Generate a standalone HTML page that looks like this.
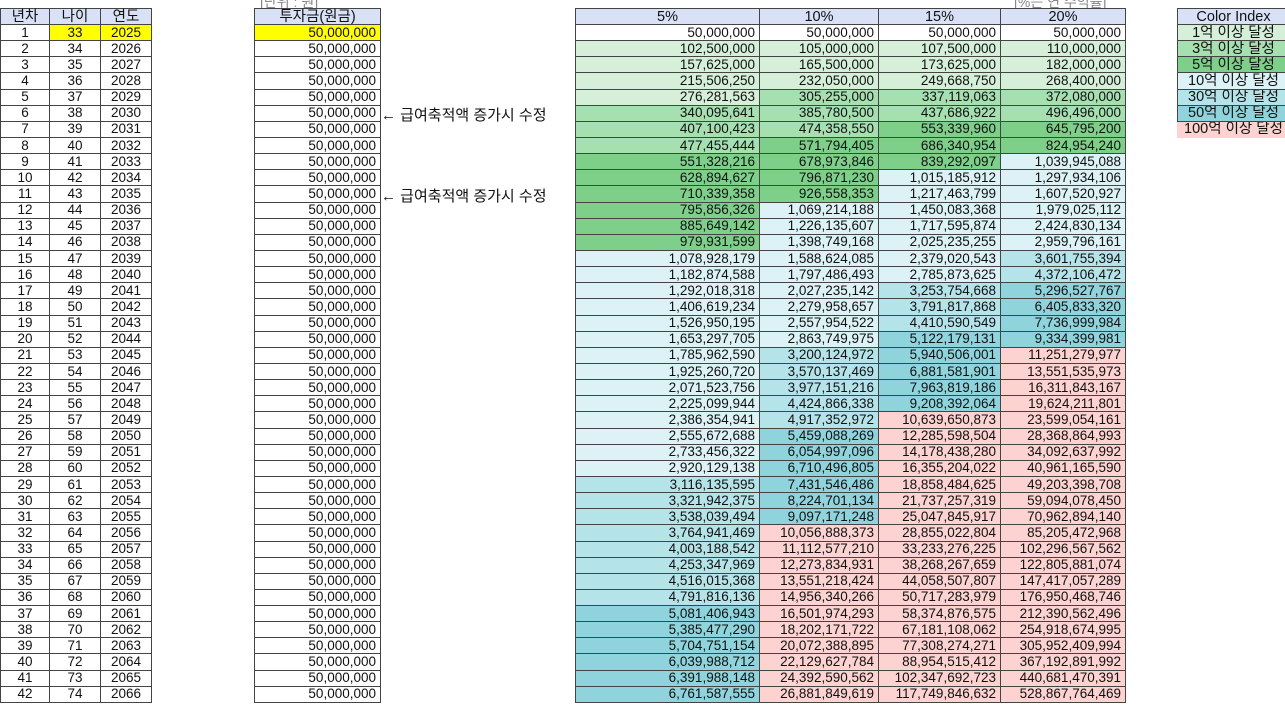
<!DOCTYPE html>
<html><head><meta charset="utf-8"><style>
body{margin:0;width:1285px;height:708px;background:#fff;position:relative;overflow:hidden;font-family:"Liberation Sans","Noto Sans CJK KR",sans-serif;font-size:13.5px;color:#111}
table{position:absolute;top:8px;border-collapse:collapse;table-layout:fixed}
td{border:1px solid #444;height:15.15px;padding:0 4px;line-height:14px;white-space:nowrap;overflow:hidden}
th{border:1px solid #444;height:15px;background:#d9e1f7;font-weight:normal;padding:0;line-height:14px;font-size:14.5px}
.c{text-align:center}.r{text-align:right}
.k{font-size:14.5px}
.y{background:#ffff00}
.g1{background:#d5efd9}.g2{background:#a6dfb0}.g3{background:#7dcf89}
.c1{background:#ddf2f6}.c2{background:#b5e3ea}.c3{background:#8fd4dc}.p{background:#fcd3d1}
.note{position:absolute;color:#888;font-size:14px;white-space:nowrap}
.arr{position:absolute;left:381px;font-size:15px;white-space:nowrap}
</style></head><body>
<div class="note" style="left:260px;top:-8px">[단위 : 원]</div>
<div class="note" style="left:1014px;top:-8px">[%는 연 수익률]</div>
<div class="arr" style="top:104px">← 급여축적액 증가시 수정</div>
<div class="arr" style="top:185px">← 급여축적액 증가시 수정</div>

<table style="left:0;width:152px"><colgroup><col style="width:49px"><col style="width:51px"><col style="width:51px"></colgroup>
<tr><th>년차</th><th>나이</th><th>연도</th></tr>
<tr><td class="c">1</td><td class="c y">33</td><td class="c y">2025</td></tr>
<tr><td class="c">2</td><td class="c">34</td><td class="c">2026</td></tr>
<tr><td class="c">3</td><td class="c">35</td><td class="c">2027</td></tr>
<tr><td class="c">4</td><td class="c">36</td><td class="c">2028</td></tr>
<tr><td class="c">5</td><td class="c">37</td><td class="c">2029</td></tr>
<tr><td class="c">6</td><td class="c">38</td><td class="c">2030</td></tr>
<tr><td class="c">7</td><td class="c">39</td><td class="c">2031</td></tr>
<tr><td class="c">8</td><td class="c">40</td><td class="c">2032</td></tr>
<tr><td class="c">9</td><td class="c">41</td><td class="c">2033</td></tr>
<tr><td class="c">10</td><td class="c">42</td><td class="c">2034</td></tr>
<tr><td class="c">11</td><td class="c">43</td><td class="c">2035</td></tr>
<tr><td class="c">12</td><td class="c">44</td><td class="c">2036</td></tr>
<tr><td class="c">13</td><td class="c">45</td><td class="c">2037</td></tr>
<tr><td class="c">14</td><td class="c">46</td><td class="c">2038</td></tr>
<tr><td class="c">15</td><td class="c">47</td><td class="c">2039</td></tr>
<tr><td class="c">16</td><td class="c">48</td><td class="c">2040</td></tr>
<tr><td class="c">17</td><td class="c">49</td><td class="c">2041</td></tr>
<tr><td class="c">18</td><td class="c">50</td><td class="c">2042</td></tr>
<tr><td class="c">19</td><td class="c">51</td><td class="c">2043</td></tr>
<tr><td class="c">20</td><td class="c">52</td><td class="c">2044</td></tr>
<tr><td class="c">21</td><td class="c">53</td><td class="c">2045</td></tr>
<tr><td class="c">22</td><td class="c">54</td><td class="c">2046</td></tr>
<tr><td class="c">23</td><td class="c">55</td><td class="c">2047</td></tr>
<tr><td class="c">24</td><td class="c">56</td><td class="c">2048</td></tr>
<tr><td class="c">25</td><td class="c">57</td><td class="c">2049</td></tr>
<tr><td class="c">26</td><td class="c">58</td><td class="c">2050</td></tr>
<tr><td class="c">27</td><td class="c">59</td><td class="c">2051</td></tr>
<tr><td class="c">28</td><td class="c">60</td><td class="c">2052</td></tr>
<tr><td class="c">29</td><td class="c">61</td><td class="c">2053</td></tr>
<tr><td class="c">30</td><td class="c">62</td><td class="c">2054</td></tr>
<tr><td class="c">31</td><td class="c">63</td><td class="c">2055</td></tr>
<tr><td class="c">32</td><td class="c">64</td><td class="c">2056</td></tr>
<tr><td class="c">33</td><td class="c">65</td><td class="c">2057</td></tr>
<tr><td class="c">34</td><td class="c">66</td><td class="c">2058</td></tr>
<tr><td class="c">35</td><td class="c">67</td><td class="c">2059</td></tr>
<tr><td class="c">36</td><td class="c">68</td><td class="c">2060</td></tr>
<tr><td class="c">37</td><td class="c">69</td><td class="c">2061</td></tr>
<tr><td class="c">38</td><td class="c">70</td><td class="c">2062</td></tr>
<tr><td class="c">39</td><td class="c">71</td><td class="c">2063</td></tr>
<tr><td class="c">40</td><td class="c">72</td><td class="c">2064</td></tr>
<tr><td class="c">41</td><td class="c">73</td><td class="c">2065</td></tr>
<tr><td class="c">42</td><td class="c">74</td><td class="c">2066</td></tr>
</table>

<table style="left:254px;width:126px"><colgroup><col style="width:126px"></colgroup>
<tr><th>투자금(원금)</th></tr>
<tr><td class="r y">50,000,000</td></tr>
<tr><td class="r">50,000,000</td></tr><tr><td class="r">50,000,000</td></tr><tr><td class="r">50,000,000</td></tr><tr><td class="r">50,000,000</td></tr>
<tr><td class="r">50,000,000</td></tr><tr><td class="r">50,000,000</td></tr><tr><td class="r">50,000,000</td></tr><tr><td class="r">50,000,000</td></tr>
<tr><td class="r">50,000,000</td></tr><tr><td class="r">50,000,000</td></tr><tr><td class="r">50,000,000</td></tr><tr><td class="r">50,000,000</td></tr>
<tr><td class="r">50,000,000</td></tr><tr><td class="r">50,000,000</td></tr><tr><td class="r">50,000,000</td></tr><tr><td class="r">50,000,000</td></tr>
<tr><td class="r">50,000,000</td></tr><tr><td class="r">50,000,000</td></tr><tr><td class="r">50,000,000</td></tr><tr><td class="r">50,000,000</td></tr>
<tr><td class="r">50,000,000</td></tr><tr><td class="r">50,000,000</td></tr><tr><td class="r">50,000,000</td></tr><tr><td class="r">50,000,000</td></tr>
<tr><td class="r">50,000,000</td></tr><tr><td class="r">50,000,000</td></tr><tr><td class="r">50,000,000</td></tr><tr><td class="r">50,000,000</td></tr>
<tr><td class="r">50,000,000</td></tr><tr><td class="r">50,000,000</td></tr><tr><td class="r">50,000,000</td></tr><tr><td class="r">50,000,000</td></tr>
<tr><td class="r">50,000,000</td></tr><tr><td class="r">50,000,000</td></tr><tr><td class="r">50,000,000</td></tr><tr><td class="r">50,000,000</td></tr>
<tr><td class="r">50,000,000</td></tr><tr><td class="r">50,000,000</td></tr><tr><td class="r">50,000,000</td></tr><tr><td class="r">50,000,000</td></tr>
<tr><td class="r">50,000,000</td></tr>
</table>

<table style="left:575px;width:550px"><colgroup><col style="width:184px"><col style="width:119px"><col style="width:122px"><col style="width:125px"></colgroup>
<tr><th>5%</th><th>10%</th><th>15%</th><th>20%</th></tr>
<tr><td class="r">50,000,000</td><td class="r">50,000,000</td><td class="r">50,000,000</td><td class="r">50,000,000</td></tr>
<tr><td class="r g1">102,500,000</td><td class="r g1">105,000,000</td><td class="r g1">107,500,000</td><td class="r g1">110,000,000</td></tr>
<tr><td class="r g1">157,625,000</td><td class="r g1">165,500,000</td><td class="r g1">173,625,000</td><td class="r g1">182,000,000</td></tr>
<tr><td class="r g1">215,506,250</td><td class="r g1">232,050,000</td><td class="r g1">249,668,750</td><td class="r g1">268,400,000</td></tr>
<tr><td class="r g1">276,281,563</td><td class="r g2">305,255,000</td><td class="r g2">337,119,063</td><td class="r g2">372,080,000</td></tr>
<tr><td class="r g2">340,095,641</td><td class="r g2">385,780,500</td><td class="r g2">437,686,922</td><td class="r g2">496,496,000</td></tr>
<tr><td class="r g2">407,100,423</td><td class="r g2">474,358,550</td><td class="r g3">553,339,960</td><td class="r g3">645,795,200</td></tr>
<tr><td class="r g2">477,455,444</td><td class="r g3">571,794,405</td><td class="r g3">686,340,954</td><td class="r g3">824,954,240</td></tr>
<tr><td class="r g3">551,328,216</td><td class="r g3">678,973,846</td><td class="r g3">839,292,097</td><td class="r c1">1,039,945,088</td></tr>
<tr><td class="r g3">628,894,627</td><td class="r g3">796,871,230</td><td class="r c1">1,015,185,912</td><td class="r c1">1,297,934,106</td></tr>
<tr><td class="r g3">710,339,358</td><td class="r g3">926,558,353</td><td class="r c1">1,217,463,799</td><td class="r c1">1,607,520,927</td></tr>
<tr><td class="r g3">795,856,326</td><td class="r c1">1,069,214,188</td><td class="r c1">1,450,083,368</td><td class="r c1">1,979,025,112</td></tr>
<tr><td class="r g3">885,649,142</td><td class="r c1">1,226,135,607</td><td class="r c1">1,717,595,874</td><td class="r c1">2,424,830,134</td></tr>
<tr><td class="r g3">979,931,599</td><td class="r c1">1,398,749,168</td><td class="r c1">2,025,235,255</td><td class="r c1">2,959,796,161</td></tr>
<tr><td class="r c1">1,078,928,179</td><td class="r c1">1,588,624,085</td><td class="r c1">2,379,020,543</td><td class="r c2">3,601,755,394</td></tr>
<tr><td class="r c1">1,182,874,588</td><td class="r c1">1,797,486,493</td><td class="r c1">2,785,873,625</td><td class="r c2">4,372,106,472</td></tr>
<tr><td class="r c1">1,292,018,318</td><td class="r c1">2,027,235,142</td><td class="r c2">3,253,754,668</td><td class="r c3">5,296,527,767</td></tr>
<tr><td class="r c1">1,406,619,234</td><td class="r c1">2,279,958,657</td><td class="r c2">3,791,817,868</td><td class="r c3">6,405,833,320</td></tr>
<tr><td class="r c1">1,526,950,195</td><td class="r c1">2,557,954,522</td><td class="r c2">4,410,590,549</td><td class="r c3">7,736,999,984</td></tr>
<tr><td class="r c1">1,653,297,705</td><td class="r c1">2,863,749,975</td><td class="r c3">5,122,179,131</td><td class="r c3">9,334,399,981</td></tr>
<tr><td class="r c1">1,785,962,590</td><td class="r c2">3,200,124,972</td><td class="r c3">5,940,506,001</td><td class="r p">11,251,279,977</td></tr>
<tr><td class="r c1">1,925,260,720</td><td class="r c2">3,570,137,469</td><td class="r c3">6,881,581,901</td><td class="r p">13,551,535,973</td></tr>
<tr><td class="r c1">2,071,523,756</td><td class="r c2">3,977,151,216</td><td class="r c3">7,963,819,186</td><td class="r p">16,311,843,167</td></tr>
<tr><td class="r c1">2,225,099,944</td><td class="r c2">4,424,866,338</td><td class="r c3">9,208,392,064</td><td class="r p">19,624,211,801</td></tr>
<tr><td class="r c1">2,386,354,941</td><td class="r c2">4,917,352,972</td><td class="r p">10,639,650,873</td><td class="r p">23,599,054,161</td></tr>
<tr><td class="r c1">2,555,672,688</td><td class="r c3">5,459,088,269</td><td class="r p">12,285,598,504</td><td class="r p">28,368,864,993</td></tr>
<tr><td class="r c1">2,733,456,322</td><td class="r c3">6,054,997,096</td><td class="r p">14,178,438,280</td><td class="r p">34,092,637,992</td></tr>
<tr><td class="r c1">2,920,129,138</td><td class="r c3">6,710,496,805</td><td class="r p">16,355,204,022</td><td class="r p">40,961,165,590</td></tr>
<tr><td class="r c2">3,116,135,595</td><td class="r c3">7,431,546,486</td><td class="r p">18,858,484,625</td><td class="r p">49,203,398,708</td></tr>
<tr><td class="r c2">3,321,942,375</td><td class="r c3">8,224,701,134</td><td class="r p">21,737,257,319</td><td class="r p">59,094,078,450</td></tr>
<tr><td class="r c2">3,538,039,494</td><td class="r c3">9,097,171,248</td><td class="r p">25,047,845,917</td><td class="r p">70,962,894,140</td></tr>
<tr><td class="r c2">3,764,941,469</td><td class="r p">10,056,888,373</td><td class="r p">28,855,022,804</td><td class="r p">85,205,472,968</td></tr>
<tr><td class="r c2">4,003,188,542</td><td class="r p">11,112,577,210</td><td class="r p">33,233,276,225</td><td class="r p">102,296,567,562</td></tr>
<tr><td class="r c2">4,253,347,969</td><td class="r p">12,273,834,931</td><td class="r p">38,268,267,659</td><td class="r p">122,805,881,074</td></tr>
<tr><td class="r c2">4,516,015,368</td><td class="r p">13,551,218,424</td><td class="r p">44,058,507,807</td><td class="r p">147,417,057,289</td></tr>
<tr><td class="r c2">4,791,816,136</td><td class="r p">14,956,340,266</td><td class="r p">50,717,283,979</td><td class="r p">176,950,468,746</td></tr>
<tr><td class="r c3">5,081,406,943</td><td class="r p">16,501,974,293</td><td class="r p">58,374,876,575</td><td class="r p">212,390,562,496</td></tr>
<tr><td class="r c3">5,385,477,290</td><td class="r p">18,202,171,722</td><td class="r p">67,181,108,062</td><td class="r p">254,918,674,995</td></tr>
<tr><td class="r c3">5,704,751,154</td><td class="r p">20,072,388,895</td><td class="r p">77,308,274,271</td><td class="r p">305,952,409,994</td></tr>
<tr><td class="r c3">6,039,988,712</td><td class="r p">22,129,627,784</td><td class="r p">88,954,515,412</td><td class="r p">367,192,891,992</td></tr>
<tr><td class="r c3">6,391,988,148</td><td class="r p">24,392,590,562</td><td class="r p">102,347,692,723</td><td class="r p">440,681,470,391</td></tr>
<tr><td class="r c3">6,761,587,555</td><td class="r p">26,881,849,619</td><td class="r p">117,749,846,632</td><td class="r p">528,867,764,469</td></tr>
</table>

<table style="left:1177px;width:112px"><colgroup><col style="width:112px"></colgroup>
<tr><th>Color Index</th></tr>
<tr><td class="c k g1" style="padding:0">1억 이상 달성</td></tr>
<tr><td class="c k g2" style="padding:0">3억 이상 달성</td></tr>
<tr><td class="c k g3" style="padding:0">5억 이상 달성</td></tr>
<tr><td class="c k c1" style="padding:0">10억 이상 달성</td></tr>
<tr><td class="c k c2" style="padding:0">30억 이상 달성</td></tr>
<tr><td class="c k c3" style="padding:0">50억 이상 달성</td></tr>
<tr><td class="c k p" style="padding:0;border-color:#fcd3d1">100억 이상 달성</td></tr>
</table>
</body></html>
